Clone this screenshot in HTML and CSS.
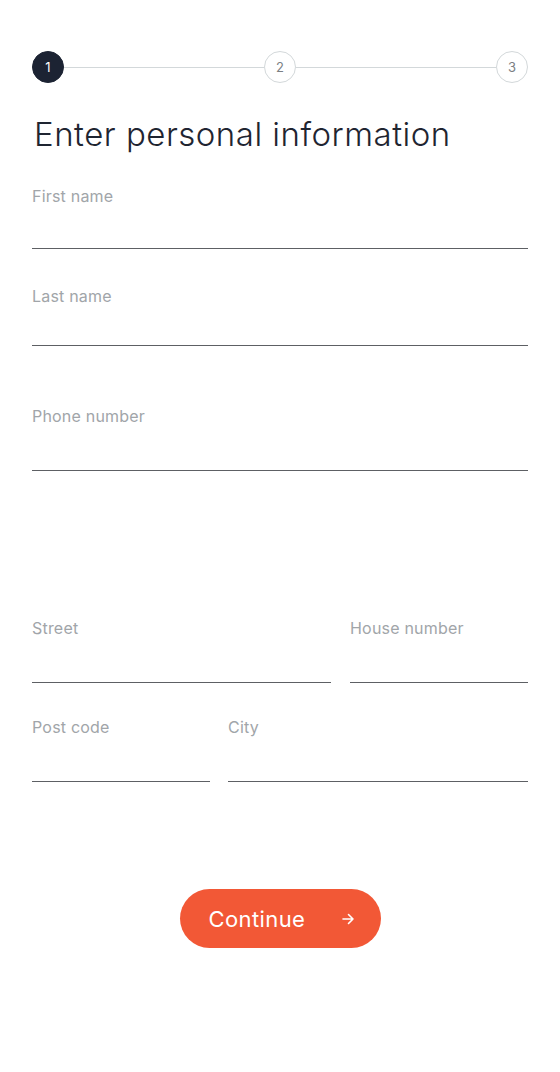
FILE: index.html
```html
<!DOCTYPE html>
<html lang="en">
  <head>
    <meta charset="UTF-8" />
    <meta name="viewport" content="width=device-width, initial-scale=1.0" />
    <title>Enter personal information</title>
    <link rel="stylesheet" href="styles.css">
  </head>
  <body>
    <div class="page">
      <div class="stepper">
        <div class="step active">1</div>
        <div class="step-line"></div>
        <div class="step">2</div>
        <div class="step-line"></div>
        <div class="step">3</div>
      </div>

      <h1 class="title">Enter personal information</h1>

      <form class="form">
        <div class="field field-first">
          <label for="firstname">First name</label>
          <input type="text" id="firstname" class="form-control" />
        </div>

        <div class="field field-last">
          <label for="lastname">Last name</label>
          <input type="text" id="lastname" class="form-control" />
        </div>

        <div class="field field-phone">
          <label for="phone">Phone number</label>
          <input type="tel" id="phone" class="form-control" />
        </div>

        <div class="row row-street">
          <div class="field">
            <label for="street">Street</label>
            <input type="text" id="street" class="form-control" />
          </div>
          <div class="field">
            <label for="house">House number</label>
            <input type="text" id="house" class="form-control" />
          </div>
        </div>

        <div class="row row-city">
          <div class="field">
            <label for="postcode">Post code</label>
            <input type="text" id="postcode" class="form-control" />
          </div>
          <div class="field">
            <label for="city">City</label>
            <input type="text" id="city" class="form-control" />
          </div>
        </div>

        <div class="actions">
          <button type="submit" class="btn-continue">
            <span>Continue</span>
            <svg class="arrow" width="14" height="14" viewBox="0 0 14 14" fill="none" stroke="currentColor" stroke-width="1.6" stroke-linecap="round" stroke-linejoin="round">
              <path d="M2 7h10M7.5 2.5L12 7l-4.5 4.5" />
            </svg>
          </button>
        </div>
      </form>
    </div>
  </body>
</html>
```

FILE: styles.css
```css
:root {
  --dark: #1c2333;
  --text: #1f2531;
  --muted: #a1a5a9;
  --line: #5d6064;
  --step-line: #d3d8da;
  --accent: #f25836;
}

* {
  box-sizing: border-box;
  margin: 0;
  padding: 0;
  font-family: Inter, "Noto Sans", sans-serif;
}

body {
  background: #fff;
}

.page {
  padding: 51px 32px 0;
}

/* Stepper */
.stepper {
  display: flex;
  align-items: center;
}

.step {
  width: 32px;
  height: 32px;
  border-radius: 50%;
  border: 1px solid var(--step-line);
  display: flex;
  align-items: center;
  justify-content: center;
  font-size: 13px;
  color: #7b7f83;
  flex-shrink: 0;
}

.step.active {
  background: var(--dark);
  border-color: var(--dark);
  color: #fff;
}

.step-line {
  flex: 1;
  height: 1px;
  background: var(--step-line);
}

/* Title */
.title {
  margin-top: 29px;
  margin-left: 2px;
  font-size: 33px;
  line-height: 44px;
  font-weight: 300;
  color: var(--text);
  letter-spacing: 0.5px;
}

/* Fields */
.field label {
  display: block;
  font-size: 16px;
  line-height: 20px;
  letter-spacing: 0.2px;
  color: var(--muted);
}

.form-control {
  display: block;
  width: 100%;
  height: 45px;
  border: none;
  border-bottom: 1px solid var(--line);
  background: transparent;
  font-size: 16px;
  outline: none;
}

.field-first {
  margin-top: 30px;
}

.field-first .form-control {
  height: 43px;
}

.field-last {
  margin-top: 37px;
}

.field-last .form-control {
  height: 40px;
}

.field-phone {
  margin-top: 60px;
}

.row {
  display: grid;
}

.row-street {
  margin-top: 147px;
  grid-template-columns: 299px 1fr;
  column-gap: 19px;
}

.row-city {
  margin-top: 34px;
  grid-template-columns: 178px 1fr;
  column-gap: 18px;
}

/* Button */
.actions {
  display: flex;
  justify-content: center;
  margin-top: 107px;
}

.btn-continue {
  display: flex;
  align-items: center;
  width: 201px;
  height: 59px;
  padding: 0 26px 0 29px;
  justify-content: space-between;
  background: var(--accent);
  color: #fff;
  border: none;
  border-radius: 30px;
  font-size: 22px;
  letter-spacing: 0.4px;
  cursor: pointer;
}

.arrow {
  margin-top: 1px;
}
```
